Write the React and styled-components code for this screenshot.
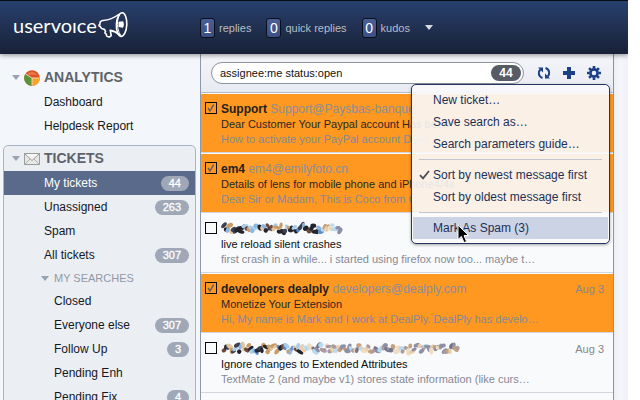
import React from 'react';
import styled, { createGlobalStyle, css } from 'styled-components';

const GlobalStyle = createGlobalStyle`
  * { box-sizing: border-box; }
  html, body, #root { height: 100%; }
  body {
    margin: 0;
    overflow: hidden;
    background: #fff;
    color: #14181f;
    font: 12px/16px "Liberation Sans", Arial, sans-serif;
  }
  ul { list-style: none; margin: 0; padding: 0; }
  button { font: inherit; color: inherit; border: 0; background: none; padding: 0; margin: 0; text-align: left; }
  a { color: inherit; text-decoration: none; }
  svg { display: block; }
`;

const Page = styled.div`
  height: 100%;
  margin-right: 12px;
  display: flex;
  flex-direction: column;
`;

/* ---------- header ---------- */
const Header = styled.header`
  flex: none;
  height: 54px;
  display: flex;
  align-items: center;
  padding-left: 13px;
  border-top: 1px solid #080b12;
  background: linear-gradient(#28406e, #202f4f 55%, #172137);
  color: #b9bdc6;
  box-shadow: 0 1px 5px rgba(0, 0, 0, 0.45);
  clip-path: inset(0 0 -8px 0);
  z-index: 1;
`;

const Logo = styled.a`
  width: 187px;
  display: flex;
  align-items: center;
  gap: 1px;
  color: #fff;
  padding-bottom: 5px;
`;

const Wordmark = styled.span`
  font: 400 20px/24px Lato, sans-serif;
`;

const Stats = styled.div`
  display: flex;
  align-items: center;
  gap: 15px;
`;

const Stat = styled.a`
  display: flex;
  align-items: center;
  gap: 4px;
  font-size: 11px;
`;

const StatCount = styled.b`
  width: 15px;
  height: 20px;
  border: 1px solid #0b0f19;
  border-radius: 3px;
  background: linear-gradient(#4a5f96, #3c5086);
  color: #fff;
  font-weight: 400;
  font-size: 14px;
  line-height: 19px;
  text-align: center;
`;

const Caret = styled.span`
  flex: none;
  width: 0;
  height: 0;
  border: 4px solid transparent;
  border-bottom: 0;
  border-top: 5px solid ${(p) => p.$color || '#98a2b3'};
`;

const CaretButton = styled.button`
  display: flex;
`;

/* ---------- sidebar ---------- */
const Body = styled.div`
  flex: 1;
  min-height: 0;
  display: flex;
`;

const Sidebar = styled.nav`
  flex: none;
  width: 200px;
  padding: 10px 4px 0 3px;
  overflow: hidden;
  background: #f3f6fa;
`;

const Group = styled.section`
  border: 1px solid ${(p) => (p.$boxed ? '#a9b4c8' : 'transparent')};
  border-radius: 5px;
  background: ${(p) => (p.$boxed ? '#ebeff4' : 'none')};
  margin-bottom: 6px;
`;

const GroupTitle = styled.h2`
  height: 25px;
  margin: 0;
  padding-left: 8px;
  display: flex;
  align-items: center;
  gap: 4px;
  color: #5f6369;
  font-size: 14px;
  line-height: 25px;
`;

const SubTitle = styled.h3`
  height: 22px;
  margin: 0;
  padding-left: 37px;
  display: flex;
  align-items: center;
  gap: 5px;
  color: #9298a6;
  font-size: 11px;
  font-weight: 400;
`;

const NavLink = styled.a`
  height: 24px;
  padding: 0 6px 0 ${(p) => (p.$nested ? 50 : 40)}px;
  display: flex;
  align-items: center;
  justify-content: space-between;
  ${(p) => p.$active && css`
    background: #5a6a8b;
    color: #fff;
  `}
`;

const Badge = styled.span`
  padding: 0 8px;
  border-radius: 8px;
  background: #a0a8b8;
  color: #fff;
  font-size: 11px;
  line-height: 15px;
  -webkit-text-stroke: 0.3px #fff;
`;

/* ---------- ticket list ---------- */
const Main = styled.main`
  flex: 1;
  min-width: 0;
  border-left: 1px solid #8f98ab;
  border-right: 1px solid #8f929b;
  background: #f9fafc;
`;

const Gutter = styled.aside`
  flex: none;
  width: 14px;
  background: linear-gradient(90deg, #eceef4, #f5f6fb 40%, #f1f2f9);
`;

const SearchBar = styled.div`
  position: relative;
  height: 39px;
  padding: 0 12px 0 10px;
  display: flex;
  align-items: center;
  gap: 13px;
  border-bottom: 1px solid #b4bccb;
  background: linear-gradient(#f5f6fa, #e7eaf1);
`;

const SearchBox = styled.label`
  flex: 1;
  min-width: 0;
  height: 22px;
  padding: 0 2px 0 8px;
  display: flex;
  align-items: center;
  border: 1px solid #8d939f;
  border-radius: 11px;
  background: #fff;
`;

const SearchInput = styled.input`
  flex: 1;
  min-width: 0;
  border: 0;
  padding: 0;
  outline: 0;
  background: none;
  color: #111;
  font: 11px/16px "Liberation Sans", Arial, sans-serif;
`;

const SearchCount = styled.span`
  width: 30px;
  border-radius: 8px;
  background: #575b64;
  color: #fff;
  font-size: 12px;
  font-weight: 700;
  line-height: 16px;
  text-align: center;
`;

const Tools = styled.div`
  display: flex;
  gap: 11px;
  color: #1c3f86;
`;

const Ticket = styled.li`
  margin-top: 1px;
  padding: 7px 9px 5px 4px;
  display: grid;
  grid-template-columns: 12px minmax(0, 1fr);
  column-gap: 4px;
  border-bottom: 1px solid #d3d6dc;
  background: ${(p) => (p.$checked ? '#ff9821' : '#f9fafc')};
  color: #222;
  font-size: 11px;
  line-height: 15px;
`;

const Tick = styled.label`
  display: grid;
  align-content: start;
  padding-top: 1px;
  > * { grid-area: 1 / 1; }
`;

const TickInput = styled.input`
  appearance: none;
  width: 12px;
  height: 12px;
  margin: 0;
  border: 1px solid #0c0a08;
`;

const TicketTop = styled.div`
  height: 16px;
  display: flex;
  justify-content: space-between;
  font-size: 12px;
  line-height: 16px;
  white-space: nowrap;
`;

const Muted = styled.span`
  color: #8b8e9a;
`;

const DateText = styled.time`
  color: #85878c;
  font-size: 11px;
`;

const Subject = styled.div`
  color: ${(p) => (p.$checked ? '#2a2723' : '#0c0e12')};
  white-space: nowrap;
`;

const Excerpt = styled.div`
  color: #868995;
  white-space: nowrap;
`;

/* ---------- settings menu ---------- */
const Menu = styled.ul`
  position: absolute;
  z-index: 2;
  top: 30px;
  right: 3px;
  width: 199px;
  && { padding: 4px 1px; }
  border: 1px solid #22365f;
  border-radius: 5px;
  background: rgba(249, 249, 251, 0.9);
  box-shadow: 0 1px 3px rgba(0, 0, 0, 0.35);
  color: #1d3057;
`;

const MenuButton = styled.button`
  && { padding: 0 8px 0 6px; }
  width: 100%;
  height: 22px;
  display: grid;
  grid-template-columns: 10px 1fr;
  gap: 4px;
  align-items: center;
  && { background: ${(p) => (p.$hover ? '#ccd3e4' : 'none')}; }
`;

const MenuLabel = styled.span`
  grid-column: 2;
`;

const Divider = styled.li`
  height: 1px;
  margin: 4px 6px;
  background: #c0c5d3;
`;

const Pointer = styled.li`
  position: absolute;
  left: 45px;
  bottom: -1px;
`;

/* ---------- drawings ---------- */
const Megaphone = () => (
  <svg width="30" height="28" viewBox="0 0 30 28" fill="none" stroke="#fff" strokeWidth="1.6" strokeLinejoin="round" strokeLinecap="round" aria-hidden="true">
    <path d="M20.5 3.5 C15.5 7.5 11 9 5 9.5 C2.5 9.8 1.6 11.5 2 13.3 C.5 13.8 .6 15.2 2.2 15.4 C2.8 17.5 4 18.2 6.5 18.4 L7.6 20.5 C6.4 21.3 6.8 22.5 8.2 23 L8.7 25 C10 26.4 12.7 26 13.2 24.5 L12.2 19.4 C15.5 19.8 18.3 21 22 24.2" />
    <ellipse cx="23.6" cy="13.6" rx="5.2" ry="11.8" transform="rotate(3 23.6 13.6)" />
    <path d="M21.5 4 C18.5 9 18.7 18 22.2 23.5" strokeWidth="1" />
    <path d="M20.5 10.8 L25 10.2 Q26.8 13.3 25 16.8 L20.5 16 Z" fill="#fff" stroke="none" />
  </svg>
);

const PieIcon = () => (
  <svg width="16" height="16" viewBox="0 0 16 16" aria-hidden="true">
    <circle cx="8" cy="8" r="7.8" fill="#dc5529" />
    <path d="M8 8 L1.3 4 A7.8 7.8 0 0 0 8 15.8 Z" fill="#5a9438" />
    <path d="M8 8 H15.8 A7.8 7.8 0 0 1 8 15.8 Z" fill="#f9a52a" />
    <path d="M2.5 5 Q8 -1 13.5 5 Q8 4 2.5 5" fill="#ef8a60" opacity=".7" />
    <path d="M8 15.6 V8 H15.6 M8 8 L1.6 4" fill="none" stroke="#f6ead0" strokeWidth=".8" />
  </svg>
);

const MailIcon = () => (
  <svg width="16" height="12" viewBox="0 0 16 12" fill="#e6e6e4" stroke="#9a9b9b" aria-hidden="true">
    <rect x=".5" y=".5" width="15" height="11" />
    <path d="M.5 11.5 L6 6 M15.5 11.5 L10 6" fill="none" stroke="#b4b5b5" />
    <path d="M.5 .5 L8 7.5 L15.5 .5 Z" fill="#f6f6f4" />
  </svg>
);

const RefreshIcon = () => (
  <svg width="14" height="14" viewBox="0 0 14 14" fill="none" stroke="currentColor" strokeWidth="2" aria-hidden="true">
    <path d="M5.5 12 C1 10.5 1 5.5 3.4 3.6" />
    <path d="M1 1.5 H6 V6.5 Z" fill="currentColor" stroke="none" />
    <path d="M8.5 2 C13 3.5 13 8.5 10.6 10.4" />
    <path d="M13 12.5 H8 V7.5 Z" fill="currentColor" stroke="none" />
  </svg>
);

const PlusIcon = () => (
  <svg width="14" height="14" viewBox="0 0 14 14" fill="currentColor" aria-hidden="true">
    <path d="M5 1 H9 V5 H13 V9 H9 V13 H5 V9 H1 V5 H5 Z" />
  </svg>
);

const GearIcon = () => (
  <svg width="14" height="14" viewBox="0 0 14 14" fill="none" stroke="currentColor" aria-hidden="true">
    <circle cx="7" cy="7" r="3.6" strokeWidth="2.6" />
    {[0, 45, 90, 135].map((a) => (
      <path key={a} d="M7 0 V2.6 M7 11.4 V14" strokeWidth="2.6" transform={`rotate(${a} 7 7)`} />
    ))}
  </svg>
);

const TickMark = () => (
  <svg width="12" height="12" viewBox="0 0 12 12" fill="none" stroke="#625a60" strokeWidth="1.4" aria-hidden="true">
    <path d="M3 6 L5 9 L8.7 2.6" />
  </svg>
);

const MenuCheck = () => (
  <svg width="11" height="10" viewBox="0 0 11 10" fill="none" stroke="#4c4f55" strokeWidth="1.8" aria-hidden="true">
    <path d="M1 5.2 L4 8.3 L10 1" />
  </svg>
);

const DARK = ['#23242c', '#5b8fc9', '#a9cdea', '#c99a63', '#23242c', '#6e4a3c', '#8fb7de', '#3d4152', '#e6c49a'];
const LIGHT = ['#e9cfae', '#8d8fa6', '#b9d9ee', '#c6a07a', '#75758a', '#f0dcc0', '#a99ba0'];

function Redacted({ width, darkUntil, seed }) {
  let s = seed;
  const rand = () => {
    s = (s * 16807) % 2147483647;
    return s / 2147483647;
  };
  const blobs = [];
  for (let x = 3; x < width - 3; x += 1.9) {
    const set = x < darkUntil ? DARK : LIGHT;
    const y = 4 + rand() * 7;
    blobs.push(
      <ellipse
        key={x}
        cx={x}
        cy={y}
        rx={2 + rand() * 1.8}
        ry={1.6 + rand() * 0.8}
        fill={set[Math.floor(rand() * set.length)]}
        transform={`rotate(${Math.floor(rand() * 180)} ${x} ${y})`}
      />
    );
  }
  return <svg width={width} height="16" viewBox={`0 0 ${width} 16`} role="img" aria-label="Hidden sender">{blobs}</svg>;
}

/* ---------- data ---------- */
const ticketLinks = [['My tickets', 44], ['Unassigned', 263], ['Spam'], ['All tickets', 307]];
const searchLinks = [['Closed'], ['Everyone else', 307], ['Follow Up', 3], ['Pending Enh'], ['Pending Fix', 4]];
const tickets = [
  { checked: true, name: 'Support', mail: 'Support@Paysbas-banque', date: '', subject: 'Dear Customer Your Paypal account Has been', text: 'How to activate your PayPal account Dear' },
  { checked: true, name: 'em4', mail: 'em4@emilyfoto.cn', date: '', subject: 'Details of lens for mobile phone and iPhone4/4s', text: 'Dear Sir or Madam, This is Coco from C' },
  { hidden: { width: 122, darkUntil: 100, seed: 4127 }, date: '', subject: 'live reload silent crashes', text: 'first crash in a while... i started using firefox now too... maybe t…' },
  { checked: true, name: 'developers dealply', mail: 'developers@dealply.com', date: 'Aug 3', subject: 'Monetize Your Extension', text: 'Hi, My name is Mark and I work at DealPly. DealPly has develo…' },
  { hidden: { width: 240, darkUntil: 80, seed: 97531 }, date: 'Aug 3', subject: 'Ignore changes to Extended Attributes', text: 'TextMate 2 (and maybe v1) stores state information (like curs…' },
];

const Links = ({ items, nested, active }) => (
  <ul>
    {items.map(([label, count]) => (
      <li key={label}>
        <NavLink href="#" $nested={nested} $active={label === active}>
          {label}
          {count !== undefined && <Badge>{count}</Badge>}
        </NavLink>
      </li>
    ))}
  </ul>
);

const MenuItem = ({ label, checked, hover }) => (
  <li>
    <MenuButton type="button" $hover={hover}>
      {checked && <MenuCheck />}
      <MenuLabel>{label}</MenuLabel>
    </MenuButton>
  </li>
);

export default function App() {
  return (
    <Page>
      <GlobalStyle />
      <Header>
        <Logo href="#" aria-label="uservoice">
          <Wordmark>uservoıce</Wordmark>
          <Megaphone />
        </Logo>
        <Stats>
          <Stat href="#"><StatCount>1</StatCount>replies</Stat>
          <Stat href="#"><StatCount>0</StatCount>quick replies</Stat>
          <Stat href="#"><StatCount>0</StatCount>kudos</Stat>
          <CaretButton type="button" aria-label="More"><Caret $color="#d8dbe2" /></CaretButton>
        </Stats>
      </Header>
      <Body>
        <Sidebar>
          <Group>
            <GroupTitle><Caret /><PieIcon />ANALYTICS</GroupTitle>
            <Links items={[['Dashboard'], ['Helpdesk Report']]} />
          </Group>
          <Group $boxed>
            <GroupTitle><Caret /><MailIcon />TICKETS</GroupTitle>
            <Links items={ticketLinks} active="My tickets" />
            <SubTitle><Caret />MY SEARCHES</SubTitle>
            <Links items={searchLinks} nested />
          </Group>
        </Sidebar>
        <Main>
          <SearchBar>
            <SearchBox>
              <SearchInput type="text" aria-label="Search tickets" defaultValue="assignee:me status:open" />
              <SearchCount>44</SearchCount>
            </SearchBox>
            <Tools>
              <button type="button" aria-label="Refresh"><RefreshIcon /></button>
              <button type="button" aria-label="Add"><PlusIcon /></button>
              <button type="button" aria-label="Settings"><GearIcon /></button>
            </Tools>
            <Menu>
              <MenuItem label="New ticket…" />
              <MenuItem label="Save search as…" />
              <MenuItem label="Search parameters guide…" />
              <Divider />
              <MenuItem label="Sort by newest message first" checked />
              <MenuItem label="Sort by oldest message first" />
              <Divider />
              <MenuItem label="Mark As Spam (3)" hover />
              <Pointer>
                <svg width="13" height="20" viewBox="0 0 13 20" aria-hidden="true">
                  <path d="M1 1 V15.5 L4.4 12.4 L7 18.6 L9.6 17.5 L7 11.5 H11.6 Z" fill="#000" stroke="#fff" />
                </svg>
              </Pointer>
            </Menu>
          </SearchBar>
          <ul>
            {tickets.map((t) => (
              <Ticket key={t.subject} $checked={t.checked}>
                <Tick>
                  <TickInput type="checkbox" defaultChecked={t.checked} aria-label={t.subject} />
                  {t.checked && <TickMark />}
                </Tick>
                <div>
                  <TicketTop>
                    {t.hidden ? <Redacted {...t.hidden} /> : <span><b>{t.name}</b> <Muted>{t.mail}</Muted></span>}
                    {t.date && <DateText>{t.date}</DateText>}
                  </TicketTop>
                  <Subject $checked={t.checked}>{t.subject}</Subject>
                  <Excerpt>{t.text}</Excerpt>
                </div>
              </Ticket>
            ))}
          </ul>
        </Main>
        <Gutter />
      </Body>
    </Page>
  );
}
